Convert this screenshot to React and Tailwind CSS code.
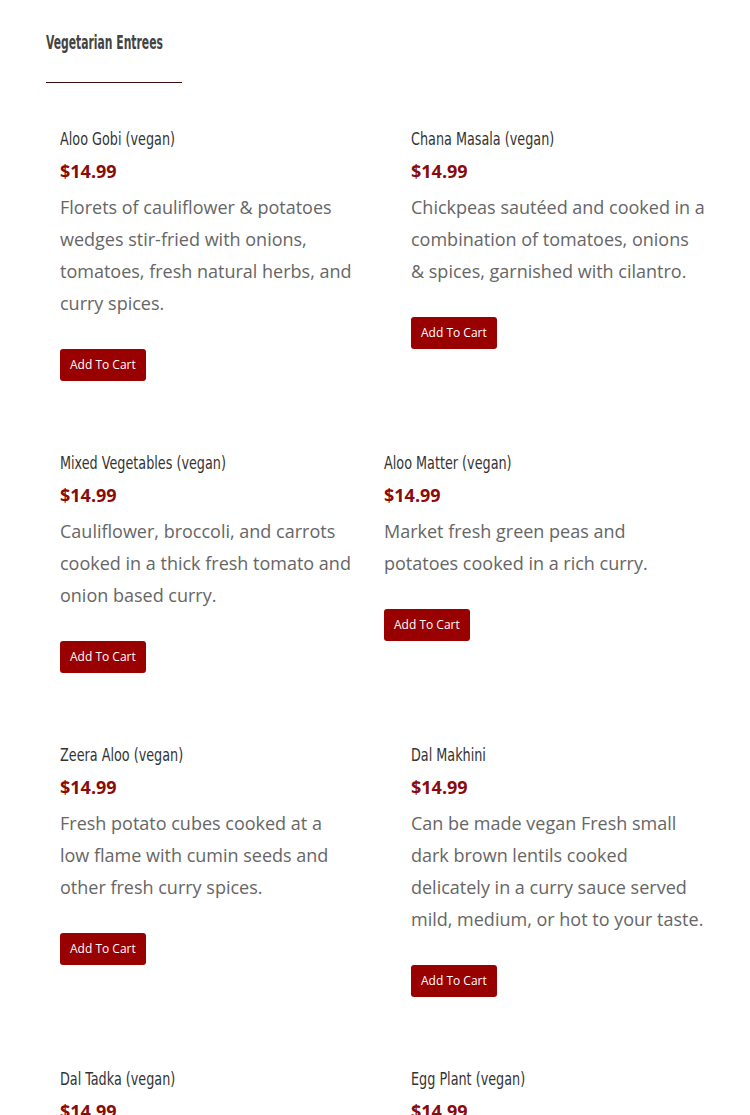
import React from 'react';

const items = [
  { name: 'Aloo Gobi (vegan)', desc: 'Florets of cauliflower & potatoes wedges stir-fried with onions, tomatoes, fresh natural herbs, and curry spices.' },
  { name: 'Chana Masala (vegan)', desc: 'Chickpeas sautéed and cooked in a combination of tomatoes, onions & spices, garnished with cilantro.' },
  { name: 'Mixed Vegetables (vegan)', desc: 'Cauliflower, broccoli, and carrots cooked in a thick fresh tomato and onion based curry.' },
  { name: 'Aloo Matter (vegan)', desc: 'Market fresh green peas and potatoes cooked in a rich curry.', shift: true },
  { name: 'Zeera Aloo (vegan)', desc: 'Fresh potato cubes cooked at a low flame with cumin seeds and other fresh curry spices.' },
  { name: 'Dal Makhini', desc: 'Can be made vegan Fresh small dark brown lentils cooked delicately in a curry sauce served mild, medium, or hot to your taste.' },
  { name: 'Dal Tadka (vegan)', desc: 'Yellow lentils tempered with cumin, garlic, onions and tomatoes.' },
  { name: 'Egg Plant (vegan)', desc: 'Roasted eggplant mashed and cooked with onions, tomatoes and spices.' },
];

const condensed = { fontFamily: '"Liberation Sans Narrow", "DejaVu Sans Condensed", sans-serif' };

function MenuItem({ item }) {
  return (
    <div className={`w-[294px] ${item.shift ? 'ml-[-27px]' : ''}`}>
      <h3 className="text-[18px] leading-[32px] text-[#333] whitespace-nowrap origin-left scale-x-[0.79]" style={condensed}>{item.name}</h3>
      <p className="text-[18px] leading-[32px] font-bold text-[#8b0a0a] mb-1">$14.99</p>
      <p className="text-[18px] leading-[32px] text-[#666]">{item.desc}</p>
      <button className="mt-[30px] h-[32px] px-[10px] bg-[#990000] text-white text-[12px] rounded-[3px]">Add To Cart</button>
    </div>
  );
}

export default function App() {
  return (
    <div className="w-[750px] h-[1115px] overflow-hidden bg-white pl-[46px] pt-[28px]" style={{ fontFamily: '"Open Sans", sans-serif' }}>
      {/* Section heading */}
      <h2 className="text-[20px] leading-[28px] font-bold text-[#444] whitespace-nowrap origin-left scale-x-[0.6]" style={condensed}>Vegetarian Entrees</h2>
      <div className="mt-[26px] w-[136px] h-px bg-[#3d0c0c]" />

      {/* Items */}
      <div className="grid grid-cols-[297px_297px] gap-x-[54px] gap-y-[66px] pl-[14px] pt-[40px]">
        {items.map((item) => (
          <MenuItem key={item.name} item={item} />
        ))}
      </div>
    </div>
  );
}
